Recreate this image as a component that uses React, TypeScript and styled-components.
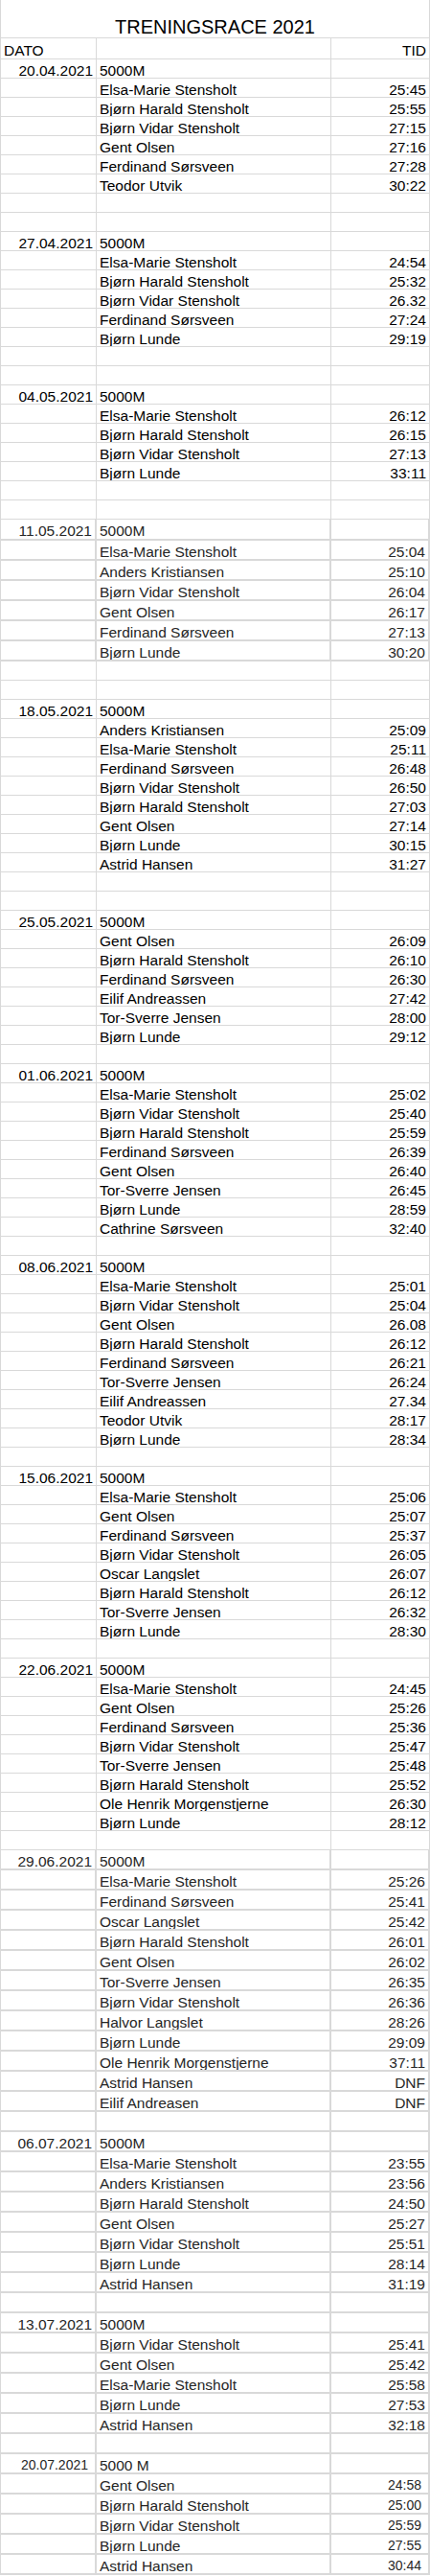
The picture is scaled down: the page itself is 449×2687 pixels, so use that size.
import styled, { createGlobalStyle } from "styled-components";

const GlobalStyle = createGlobalStyle`
  html, body {
    margin: 0;
    padding: 0;
    background: #ffffff;
  }
  body {
    font-family: "Liberation Sans", Arial, sans-serif;
    color: #000000;
  }
`;

const Sheet = styled.div`
  width: 449px;
  box-sizing: border-box;
  border-left: 1px solid #d9d9d9;
`;

const TitleRow = styled.div`
  height: 40px;
  box-sizing: border-box;
  border-right: 1px solid #d9d9d9;
  border-bottom: 1px solid #d9d9d9;
  padding-top: 16px;
  font-size: 20px;
  line-height: 24px;
  text-align: center;
  white-space: nowrap;
`;

const Row = styled.div<{ $height: number }>`
  display: grid;
  grid-template-columns: 100px 245px 103px;
  height: ${(p) => p.$height}px;
`;

const Cell = styled.div<{
  $boxed?: boolean;
  $align?: "left" | "right";
  $small?: boolean;
  $top?: number;
}>`
  box-sizing: border-box;
  height: 100%;
  overflow: hidden;
  white-space: nowrap;
  border-right: ${(p) => (p.$boxed ? 2 : 1)}px solid #d9d9d9;
  border-bottom: ${(p) => (p.$boxed ? 2 : 1)}px solid #d9d9d9;
  padding: ${(p) => p.$top ?? 2}px ${(p) => (p.$small ? 7 : 3)}px 0
    ${(p) => (p.$small ? 7 : 3)}px;
  font-size: ${(p) => (p.$small ? 14 : 15.5)}px;
  line-height: 19px;
  text-align: ${(p) => p.$align ?? "left"};
  color: ${(p) => (p.$boxed ? "#262626" : "#000000")};
`;

type Result = [string, string];

type Race = {
  date: string;
  dist?: string;
  results: Result[];
  blanks: number;
  boxed?: boolean;
  boxedBlanks?: boolean;
  small?: boolean;
  firstHeight?: number;
};

const races: Race[] = [
  {
    date: "20.04.2021",
    results: [
      ["Elsa-Marie Stensholt", "25:45"],
      ["Bjørn Harald Stensholt", "25:55"],
      ["Bjørn Vidar Stensholt", "27:15"],
      ["Gent Olsen", "27:16"],
      ["Ferdinand Sørsveen", "27:28"],
      ["Teodor Utvik", "30:22"],
    ],
    blanks: 2,
  },
  {
    date: "27.04.2021",
    results: [
      ["Elsa-Marie Stensholt", "24:54"],
      ["Bjørn Harald Stensholt", "25:32"],
      ["Bjørn Vidar Stensholt", "26.32"],
      ["Ferdinand Sørsveen", "27:24"],
      ["Bjørn Lunde", "29:19"],
    ],
    blanks: 2,
  },
  {
    date: "04.05.2021",
    results: [
      ["Elsa-Marie Stensholt", "26:12"],
      ["Bjørn Harald Stensholt", "26:15"],
      ["Bjørn Vidar Stensholt", "27:13"],
      ["Bjørn Lunde", "33:11"],
    ],
    blanks: 2,
  },
  {
    date: "11.05.2021",
    boxed: true,
    firstHeight: 22,
    results: [
      ["Elsa-Marie Stensholt", "25:04"],
      ["Anders Kristiansen", "25:10"],
      ["Bjørn Vidar Stensholt", "26:04"],
      ["Gent Olsen", "26:17"],
      ["Ferdinand Sørsveen", "27:13"],
      ["Bjørn Lunde", "30:20"],
    ],
    blanks: 2,
  },
  {
    date: "18.05.2021",
    results: [
      ["Anders Kristiansen", "25:09"],
      ["Elsa-Marie Stensholt", "25:11"],
      ["Ferdinand Sørsveen", "26:48"],
      ["Bjørn Vidar Stensholt", "26:50"],
      ["Bjørn Harald Stensholt", "27:03"],
      ["Gent Olsen", "27:14"],
      ["Bjørn Lunde", "30:15"],
      ["Astrid Hansen", "31:27"],
    ],
    blanks: 2,
  },
  {
    date: "25.05.2021",
    results: [
      ["Gent Olsen", "26:09"],
      ["Bjørn Harald Stensholt", "26:10"],
      ["Ferdinand Sørsveen", "26:30"],
      ["Eilif Andreassen", "27:42"],
      ["Tor-Sverre Jensen", "28:00"],
      ["Bjørn Lunde", "29:12"],
    ],
    blanks: 1,
  },
  {
    date: "01.06.2021",
    results: [
      ["Elsa-Marie Stensholt", "25:02"],
      ["Bjørn Vidar Stensholt", "25:40"],
      ["Bjørn Harald Stensholt", "25:59"],
      ["Ferdinand Sørsveen", "26:39"],
      ["Gent Olsen", "26:40"],
      ["Tor-Sverre Jensen", "26:45"],
      ["Bjørn Lunde", "28:59"],
      ["Cathrine Sørsveen", "32:40"],
    ],
    blanks: 1,
  },
  {
    date: "08.06.2021",
    results: [
      ["Elsa-Marie Stensholt", "25:01"],
      ["Bjørn Vidar Stensholt", "25:04"],
      ["Gent Olsen", "26.08"],
      ["Bjørn Harald Stensholt", "26:12"],
      ["Ferdinand Sørsveen", "26:21"],
      ["Tor-Sverre Jensen", "26:24"],
      ["Eilif Andreassen", "27.34"],
      ["Teodor Utvik", "28:17"],
      ["Bjørn Lunde", "28:34"],
    ],
    blanks: 1,
  },
  {
    date: "15.06.2021",
    results: [
      ["Elsa-Marie Stensholt", "25:06"],
      ["Gent Olsen", "25:07"],
      ["Ferdinand Sørsveen", "25:37"],
      ["Bjørn Vidar Stensholt", "26:05"],
      ["Oscar Langslet", "26:07"],
      ["Bjørn Harald Stensholt", "26:12"],
      ["Tor-Sverre Jensen", "26:32"],
      ["Bjørn Lunde", "28:30"],
    ],
    blanks: 1,
  },
  {
    date: "22.06.2021",
    results: [
      ["Elsa-Marie Stensholt", "24:45"],
      ["Gent Olsen", "25:26"],
      ["Ferdinand Sørsveen", "25:36"],
      ["Bjørn Vidar Stensholt", "25:47"],
      ["Tor-Sverre Jensen", "25:48"],
      ["Bjørn Harald Stensholt", "25:52"],
      ["Ole Henrik Morgenstjerne", "26:30"],
      ["Bjørn Lunde", "28:12"],
    ],
    blanks: 1,
  },
  {
    date: "29.06.2021",
    boxed: true,
    boxedBlanks: true,
    results: [
      ["Elsa-Marie Stensholt", "25:26"],
      ["Ferdinand Sørsveen", "25:41"],
      ["Oscar Langslet", "25:42"],
      ["Bjørn Harald Stensholt", "26:01"],
      ["Gent Olsen", "26:02"],
      ["Tor-Sverre Jensen", "26:35"],
      ["Bjørn Vidar Stensholt", "26:36"],
      ["Halvor Langslet", "28:26"],
      ["Bjørn Lunde", "29:09"],
      ["Ole Henrik Morgenstjerne", "37:11"],
      ["Astrid Hansen", "DNF"],
      ["Eilif Andreasen", "DNF"],
    ],
    blanks: 1,
  },
  {
    date: "06.07.2021",
    boxed: true,
    boxedBlanks: true,
    results: [
      ["Elsa-Marie Stensholt", "23:55"],
      ["Anders Kristiansen", "23:56"],
      ["Bjørn Harald Stensholt", "24:50"],
      ["Gent Olsen", "25:27"],
      ["Bjørn Vidar Stensholt", "25:51"],
      ["Bjørn Lunde", "28:14"],
      ["Astrid Hansen", "31:19"],
    ],
    blanks: 1,
  },
  {
    date: "13.07.2021",
    boxed: true,
    boxedBlanks: true,
    results: [
      ["Bjørn Vidar Stensholt", "25:41"],
      ["Gent Olsen", "25:42"],
      ["Elsa-Marie Stensholt", "25:58"],
      ["Bjørn Lunde", "27:53"],
      ["Astrid Hansen", "32:18"],
    ],
    blanks: 1,
  },
  {
    date: "20.07.2021",
    dist: "5000 M",
    boxed: true,
    small: true,
    results: [
      ["Gent Olsen", "24:58"],
      ["Bjørn Harald Stensholt", "25:00"],
      ["Bjørn Vidar Stensholt", "25:59"],
      ["Bjørn Lunde", "27:55"],
      ["Astrid Hansen", "30:44"],
    ],
    blanks: 0,
  },
];

const RaceBlock = ({ race }: { race: Race }) => {
  const h = race.boxed ? 21 : 20;
  const blankBoxed = !!race.boxedBlanks;
  const blankH = blankBoxed ? 21 : 20;

  return (
    <>
      <Row $height={race.firstHeight ?? h}>
        <Cell $boxed={race.boxed} $align="right" $small={race.small}>
          {race.date}
        </Cell>
        <Cell $boxed={race.boxed}>{race.dist ?? "5000M"}</Cell>
        <Cell $boxed={race.boxed} />
      </Row>
      {race.results.map(([name, time], i) => (
        <Row key={i} $height={h}>
          <Cell $boxed={race.boxed} />
          <Cell $boxed={race.boxed}>{name}</Cell>
          <Cell $boxed={race.boxed} $align="right" $small={race.small}>
            {time}
          </Cell>
        </Row>
      ))}
      {Array.from({ length: race.blanks }).map((_, i) => (
        <Row key={"b" + i} $height={blankH}>
          <Cell $boxed={blankBoxed} />
          <Cell $boxed={blankBoxed} />
          <Cell $boxed={blankBoxed} />
        </Row>
      ))}
    </>
  );
};

const App = () => {
  return (
    <>
      <GlobalStyle />
      <Sheet>
        <TitleRow>TRENINGSRACE 2021</TitleRow>
        <Row $height={22}>
          <Cell $top={3}>DATO</Cell>
          <Cell />
          <Cell $top={3} $align="right">
            TID
          </Cell>
        </Row>
        {races.map((race) => (
          <RaceBlock key={race.date} race={race} />
        ))}
      </Sheet>
    </>
  );
};

export default App;
